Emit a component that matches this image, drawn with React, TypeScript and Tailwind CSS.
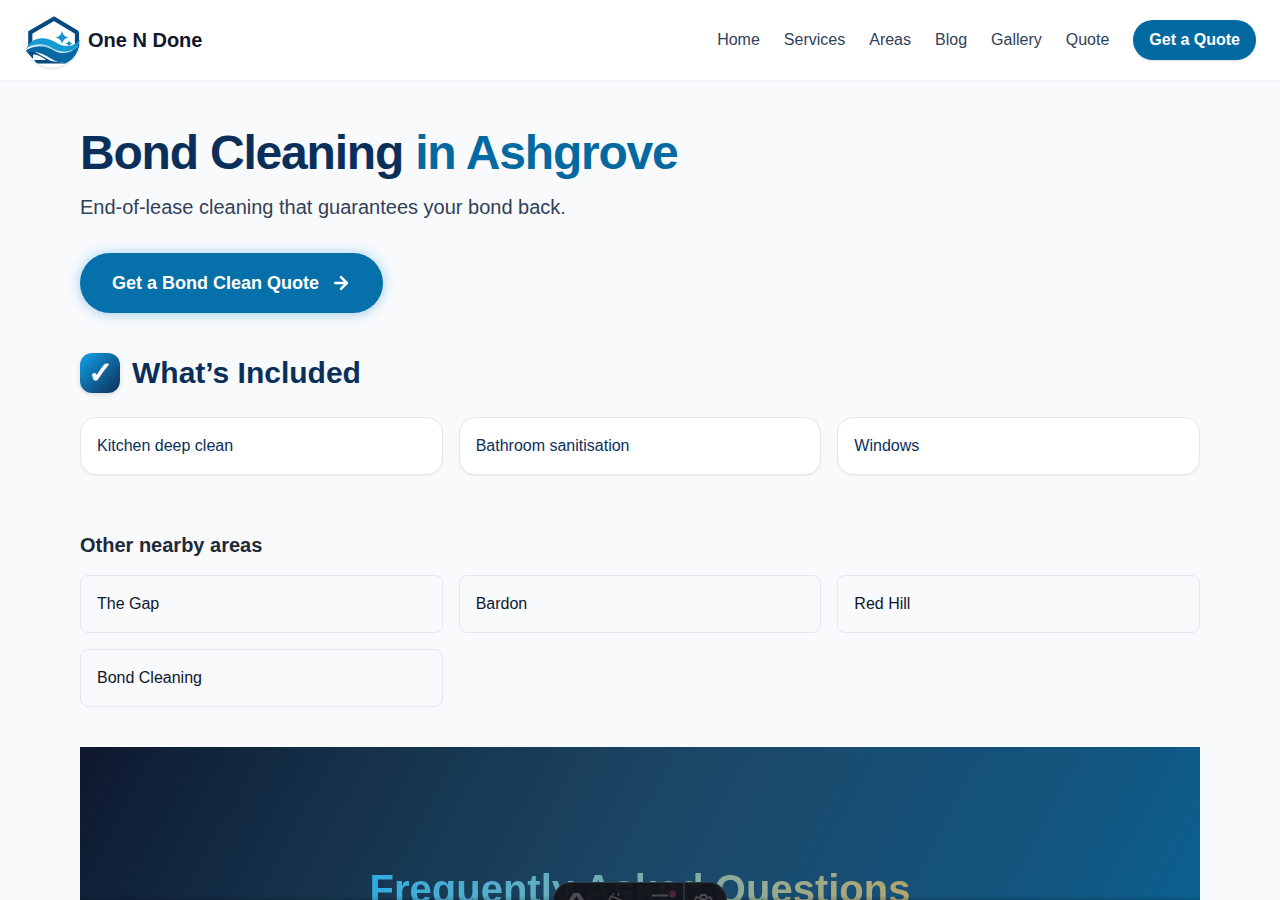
import { ArrowRight } from "lucide-react";

const links = ["Home", "Services", "Areas", "Blog", "Gallery", "Quote"];
const included = ["Kitchen deep clean", "Bathroom sanitisation", "Windows"];
const areas = ["The Gap", "Bardon", "Red Hill", "Bond Cleaning"];

function Logo() {
  return (
    <svg viewBox="0 0 56 56" className="size-14 rounded-full bg-white shadow-sm">
      <path d="M6.300 34V20.500L30 6.800L53 20.500V34" fill="none" stroke="#064a80" strokeWidth="4.200" />
      <path d="M2 38L9 39L27 49L44 51.500H13L2 39Z" fill="#064a80" />
      <path d="M9 42.500C13 42 18 45 22 48H9Z" fill="white" />
      <path d="M3 37.500C14 32 23 34 31 39C41 44 50 39 56 32C54 42 48 49 42 51C28 52 22 38 3 40Z" fill="#0869a3" />
      <path d="M2 37C8 24 22 24 32 30.500C41 36 49 35 56 28C53 41 40 43 30 38C20 32 10 32 2 37Z" fill="#169bd1" />
      <path d="M3 36C13 31 22 32 29 37C35 40.500 42 41 48 38.500" fill="none" stroke="white" strokeWidth="0.700" />
      <path d="M38 19Q39 24.500 44.500 25.500Q39 26.500 38 32Q37 26.500 31.500 25.500Q37 24.500 38 19ZM45 28Q45.500 31 48.500 31.500Q45.500 32 45 35Q44.500 32 41.500 31.500Q44.500 31 45 28Z" fill="#1593c9" />
    </svg>
  );
}

function Toolbar() {
  return (
    <div className="fixed bottom-0 left-1/2 flex h-[18px] w-[174px] -translate-x-1/2 overflow-hidden rounded-t-[20px] border border-b-0 border-[#343841] bg-[#13151a]/97">
      <svg viewBox="0 0 172 17" className="h-[17px] w-[172px] shrink-0" fill="none" stroke="#4b4c51" strokeWidth="1.800">
        <path d="M15 17L19.500 10H25.500L30 17H25L22.500 13L20 17Z" fill="#4b4c51" stroke="none" />
        <path d="M55 18L57 13L69 18M60 12L59 10M64 13L65 10" strokeWidth="1.400" />
        <path d="M98 12.500H114" />
        <circle cx="118.500" cy="11" r="3.500" fill="#4d2337" stroke="none" />
        <path d="M130 0V17" stroke="#303239" />
        <path d="M141 17L142.500 14L146 15L147.500 12H151.500L153 15L156 14L158 17M146 18A4 4 0 0 1 153 18" />
      </svg>
    </div>
  );
}

export default function App() {
  return (
    <div className="h-[900px] overflow-hidden bg-[#f9fafc] font-['Liberation_Sans',sans-serif] text-base text-slate-900">
      <header className="flex h-[81px] items-center justify-between border-b border-slate-100 bg-white px-6">
        <a className="flex items-center gap-2 text-xl font-bold">
          <Logo />
          <span>One N Done</span>
        </a>
        <nav className="flex items-center gap-6 text-slate-700">
          {links.map((link) => <a key={link}>{link}</a>)}
          <a className="rounded-full bg-[#0369a1] px-4 py-2 font-bold text-white shadow-sm">Get a Quote</a>
        </nav>
      </header>
      <main className="mx-auto w-[1120px] pt-12">
        <h1 className="text-5xl leading-[48px] font-bold tracking-[-1.2px] text-[#0b2f5b]">
          Bond Cleaning <span className="text-[#0369a1]">in Ashgrove</span>
        </h1>
        <p className="mt-4 text-xl text-slate-700">End-of-lease cleaning that guarantees your bond back.</p>
        <a className="mt-8 flex h-[60px] w-[303px] items-center rounded-full bg-[#0570aa] pl-8 text-lg font-bold text-white shadow-[0_0_14px_rgba(14,155,225,0.35),0_3px_8px_rgba(10,80,130,0.08)]">
          Get a Bond Clean Quote
          <ArrowRight className="ml-3 size-5" strokeWidth={3} />
        </a>
        <div className="mt-10 flex items-center gap-3">
          <span className="flex size-10 items-center justify-center rounded-xl bg-linear-to-br from-[#0ea5e9] to-[#0b2f5b] text-3xl font-bold text-white shadow-[0_2px_5px_rgba(0,0,0,0.12)]">✓</span>
          <h2 className="text-3xl font-bold text-[#0b2f5b]">What’s Included</h2>
        </div>
        <ul className="mt-6 grid grid-cols-3 gap-4 text-[#0b2f5b]">
          {included.map((item) => <li key={item} className="rounded-2xl border border-gray-200 bg-white p-4 shadow-[0_1px_2px_rgba(0,0,0,0.06)]">{item}</li>)}
        </ul>
        <h3 className="mt-14 text-xl font-bold text-gray-800">Other nearby areas</h3>
        <ul className="mt-4 grid grid-cols-3 gap-4">
          {areas.map((area) => <li key={area} className="rounded-lg border border-[#e3e7f0] p-4">{area}</li>)}
        </ul>
        <section className="mt-10 h-[700px] bg-[linear-gradient(118deg,#0f172a_0%,#10213a_6%,#16344c_22%,#1c4767_42%,#125680_70%,#0b6192_81%,#0369a1_100%)] pt-[116px] text-center">
          <h2 className="mx-auto w-fit bg-linear-to-r from-[#2eabe0] via-[#76aeae] to-[#b4a46d] bg-clip-text text-[40px] leading-[52px] font-bold text-transparent">Frequently Asked Questions</h2>
        </section>
      </main>
      <div className="pointer-events-none fixed inset-x-0 bottom-0 mx-auto h-1 w-[1120px] bg-linear-to-b from-transparent to-black/15" />
      <Toolbar />
    </div>
  );
}
